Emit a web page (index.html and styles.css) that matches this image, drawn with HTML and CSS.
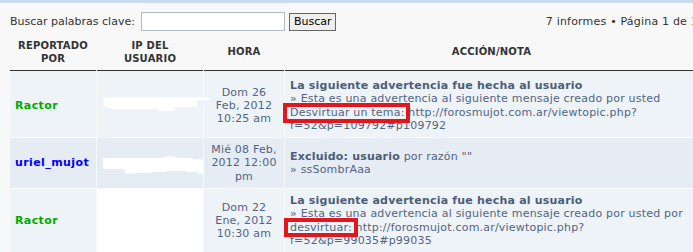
FILE: index.html
```html
<!DOCTYPE html>
<html lang="es">
<head>
<meta charset="utf-8">
<title>Informes</title>
<link rel="stylesheet" href="styles.css">
</head>
<body>
<div class="top-band"></div>
<div class="panel">
  <div class="search-bar">
    <label class="search-label" for="kw">Buscar palabras clave:</label>
    <input class="search-input" id="kw" type="text">
    <button class="search-btn" type="button">Buscar</button>
    <span class="pagination">7 informes • Página 1 de <span class="page-cur">1</span></span>
  </div>
  <table class="reports">
    <colgroup>
      <col class="c-user"><col class="c-ip"><col class="c-time"><col class="c-action">
    </colgroup>
    <thead>
      <tr>
        <th>REPORTADO<br>POR</th>
        <th>IP DEL<br>USUARIO</th>
        <th>HORA</th>
        <th>ACCIÓN/NOTA</th>
      </tr>
    </thead>
    <tbody>
      <tr class="row-a row-first">
        <td class="user user-green">Ractor</td>
        <td class="ip"><svg class="redact" width="108" height="16" viewBox="103 97 108 16"><polygon fill="#fff" points="103,98.5 210,98.5 210,101 197,101 197,108 175,108 175,112 159,112 159,110 112,110 112,109 106,109 106,107 103,107"/></svg></td>
        <td class="time">Dom 26<br>Feb, 2012<br>10:25 am</td>
        <td class="action"><strong>La siguiente advertencia fue hecha al usuario</strong><br>» Esta es una advertencia al siguiente mensaje creado por usted<br><span class="mark mark-a">Desvirtuar un tema:</span> http://forosmujot.com.ar/viewtopic.php?<br>f=52&amp;p=109792#p109792</td>
      </tr>
      <tr class="row-b">
        <td class="user user-blue">uriel_mujot</td>
        <td class="ip"><svg class="redact redact-b" width="101" height="19" viewBox="101 155 101 19"><polygon fill="#fff" points="101,157 160,157 164,155.5 172,155.5 176,157 189,157 192,158 198,158 201.5,160 201.5,172.7 196,172.7 196,171 186,171 184,170 165,170 162,171 150,171 150,172 135,172 135,172.5 123,172.5 123,168 101,168"/></svg></td>
        <td class="time">Mié 08 Feb,<br>2012 12:00<br>pm</td>
        <td class="action"><strong>Excluido: usuario</strong> por razón ""<br>» ssSombrAaa</td>
      </tr>
      <tr class="row-a">
        <td class="user user-green">Ractor</td>
        <td class="ip ip-blank"></td>
        <td class="time">Dom 22<br>Ene, 2012<br>10:30 am</td>
        <td class="action"><strong>La siguiente advertencia fue hecha al usuario</strong><br>» Esta es una advertencia al siguiente mensaje creado por usted por<br><span class="mark mark-b">desvirtuar:</span> http://forosmujot.com.ar/viewtopic.php?<br>f=52&amp;p=99035#p99035</td>
      </tr>
    </tbody>
  </table>
</div>
</body>
</html>
```

FILE: styles.css
```css
html, body {
  margin: 0;
  padding: 0;
}
body {
  background: #f8f8f8;
  font-family: "DejaVu Sans", Verdana, sans-serif;
  font-size: 11px;
  color: #333;
  width: 693px;
  height: 252px;
  overflow: hidden;
}
.top-band {
  height: 3px;
  background: #cadceb;
}
.panel {
  padding: 9px 0 0 10px;
  width: 688px;
}
.search-bar {
  display: flex;
  align-items: center;
  height: 19px;
}
.search-label {
  color: #333;
  margin-right: 6px;
}
.search-input {
  box-sizing: border-box;
  width: 144px;
  height: 19px;
  margin: 0;
  padding: 1px 3px;
  border: 1px solid #b4bac0;
  background: #fff;
  font: inherit;
}
.search-btn {
  box-sizing: border-box;
  height: 18px;
  margin: 0 0 0 4px;
  padding: 0 4px;
  border: 1px solid #666;
  background: #efefef;
  color: #000;
  font: inherit;
  font-size: 11px;
  line-height: 14px;
}
.pagination {
  margin-left: auto;
  color: #333;
  white-space: nowrap;
  letter-spacing: 0.2px;
}
.page-cur {
  color: #d38b26;
}
.reports {
  table-layout: fixed;
  border-collapse: separate;
  border-spacing: 1px 0;
  width: 690px;
  margin: 5px 0 0 -1px;
  letter-spacing: 0.2px;
}
.c-user { width: 86px; }
.c-ip { width: 106px; }
.c-time { width: 80px; }
.c-action { width: 413px; }
.reports th {
  box-sizing: border-box;
  height: 35px;
  padding: 0 2px 3px;
  font-size: 10px;
  line-height: 13px;
  font-weight: bold;
  color: #333;
  text-align: center;
  vertical-align: middle;
  border-bottom: 1px solid #333;
}
.reports td {
  padding: 5px 5px;
  line-height: 13.3px;
  vertical-align: middle;
  color: #536482;
}
.reports tbody tr + tr td {
  border-top: 1px solid #fafbfc;
}
.reports .row-first td {
  padding-top: 8px;
  padding-bottom: 5px;
}
.row-a td { background: #eef3f7; }
.row-b td { background: #e5ecf3; }
.row-a td.ip-blank { background: #fff; }
.reports td.user {
  font-weight: bold;
  white-space: nowrap;
  letter-spacing: 0.4px;
}
.reports td.user-green { color: #00aa00; }
.reports td.user-blue { color: #0000ff; }
.reports td.ip {
  padding: 0 0 0 6px;
}
.redact {
  display: block;
  overflow: visible;
}
.redact-b {
  margin-top: 4px;
}
.time {
  text-align: center;
}
.action {
  white-space: nowrap;
}
.action strong {
  color: #4c5d77;
}
.mark {
  position: relative;
}
.mark::after {
  content: "";
  position: absolute;
  border: 4px solid #e3161e;
}
.mark-a::after {
  top: -3px;
  bottom: -4px;
  left: -7px;
  right: -5px;
}
.mark-b::after {
  top: -3px;
  bottom: -3px;
  left: -6px;
  right: -6px;
}
```
